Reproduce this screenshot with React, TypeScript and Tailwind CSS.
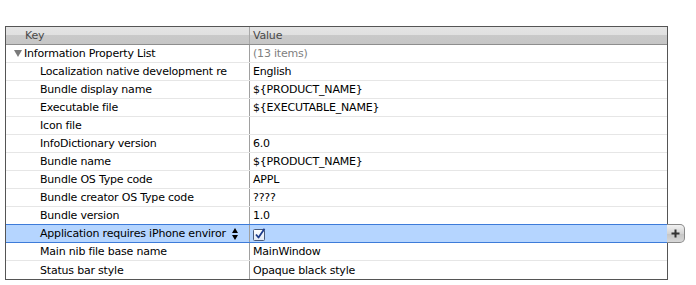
import React from 'react';

type Row = {
    key: string;
    value: string;
    root?: boolean;
    selected?: boolean;
    checkbox?: boolean;
};

const rows: Row[] = [
    { key: 'Information Property List', value: '(13 items)', root: true },
    { key: 'Localization native development re', value: 'English' },
    { key: 'Bundle display name', value: '${PRODUCT_NAME}' },
    { key: 'Executable file', value: '${EXECUTABLE_NAME}' },
    { key: 'Icon file', value: '' },
    { key: 'InfoDictionary version', value: '6.0' },
    { key: 'Bundle name', value: '${PRODUCT_NAME}' },
    { key: 'Bundle OS Type code', value: 'APPL' },
    { key: 'Bundle creator OS Type code', value: '????' },
    { key: 'Bundle version', value: '1.0' },
    { key: 'Application requires iPhone enviror', value: '', selected: true, checkbox: true },
    { key: 'Main nib file base name', value: 'MainWindow' },
    { key: 'Status bar style', value: 'Opaque black style' },
];

function CheckBox() {
    return (
        <svg width="13" height="13" viewBox="0 0 13 13" className="mt-[1px]">
            <defs>
                <linearGradient id="cb" x1="0" y1="0" x2="0" y2="1">
                    <stop offset="0" stopColor="#ffffff" />
                    <stop offset="1" stopColor="#dfe8f5" />
                </linearGradient>
            </defs>
            <rect x="0.5" y="1.5" width="11" height="11" rx="1" fill="url(#cb)" stroke="#4a5a78" />
            <path d="M3 6.5 L5.5 9.5 L11.5 0.8" fill="none" stroke="#1d3c8a" strokeWidth="1.8" strokeLinejoin="round" />
        </svg>
    );
}

function Stepper() {
    return (
        <div className="flex flex-col items-center justify-center gap-[2px] w-[8px] shrink-0">
            <span className="block w-0 h-0 border-l-[3px] border-r-[3px] border-b-[5px] border-l-transparent border-r-transparent border-b-black" />
            <span className="block w-0 h-0 border-l-[3px] border-r-[3px] border-t-[5px] border-l-transparent border-r-transparent border-t-black" />
        </div>
    );
}

export default function App() {
    return (
        <div
            className="w-[696px] h-[285px] bg-white pt-[26px] pl-[5px] text-[11px] tracking-[-0.2px] text-black"
            style={{ fontFamily: '"DejaVu Sans", "Liberation Sans", sans-serif' }}
        >
            <div className="relative w-[663px] border border-[#555555]">
                {/* Header */}
                <div className="flex h-[18px] border-b border-[#8e8e8e] bg-[linear-gradient(#e4e4e4_0%,#e0e0e0_50%,#c9c9c9_50%,#c6c6c6_100%)] text-[#4a4a4a]">
                    <div className="w-[244px] border-r border-[#a8a8a8] pl-[19px] leading-[17px]">Key</div>
                    <div className="flex-1 pl-[3px] leading-[17px]">Value</div>
                </div>

                {/* Rows */}
                {rows.map((row, idx) => {
                    const last = idx === rows.length - 1;
                    return (
                        <div
                            key={idx}
                            className={`relative flex h-[18px] ${last ? '' : 'border-b'} ${row.selected ? 'bg-[#b5d5ff] border-[#3d7bd9]' : 'bg-white border-[#e6e6e6]'}`}
                        >
                            {row.selected && <span className="absolute -top-px left-0 right-0 h-px bg-[#3d7bd9]" />}
                            <div className="w-[244px] border-r border-[#a0a0a0] flex items-center overflow-hidden">
                                {row.root ? (
                                    <div className="flex items-center pl-[8px]">
                                        <span className="block w-0 h-0 mr-[2px] border-l-[4px] border-r-[4px] border-t-[7px] border-l-transparent border-r-transparent border-t-[#7a7a7a]" />
                                        <span className="whitespace-nowrap leading-[17px]">{row.key}</span>
                                    </div>
                                ) : (
                                    <div className="flex items-center w-full pl-[34px] pr-[10px]">
                                        <span className="flex-1 whitespace-nowrap leading-[17px]">{row.key}</span>
                                        {row.selected && <Stepper />}
                                    </div>
                                )}
                            </div>
                            <div className={`flex-1 pl-[3px] flex items-center whitespace-nowrap leading-[17px] ${row.root ? 'text-[#808080]' : ''}`}>
                                {row.checkbox ? <CheckBox /> : row.value}
                            </div>
                            {row.selected && (
                                <div className="absolute left-full -top-px h-[19px] w-[18px] flex items-center justify-center rounded-r-[5px] border border-l-0 border-[#8a8a8a] bg-[linear-gradient(#f2f2f2,#d4d4d4_50%,#c4c4c4_50%,#d8d8d8)]">
                                    <svg width="9" height="9" viewBox="0 0 9 9">
                                        <path d="M4.5 0.5 V8.5 M0.5 4.5 H8.5" stroke="#333" strokeWidth="2" />
                                    </svg>
                                </div>
                            )}
                        </div>
                    );
                })}
            </div>
        </div>
    );
}
